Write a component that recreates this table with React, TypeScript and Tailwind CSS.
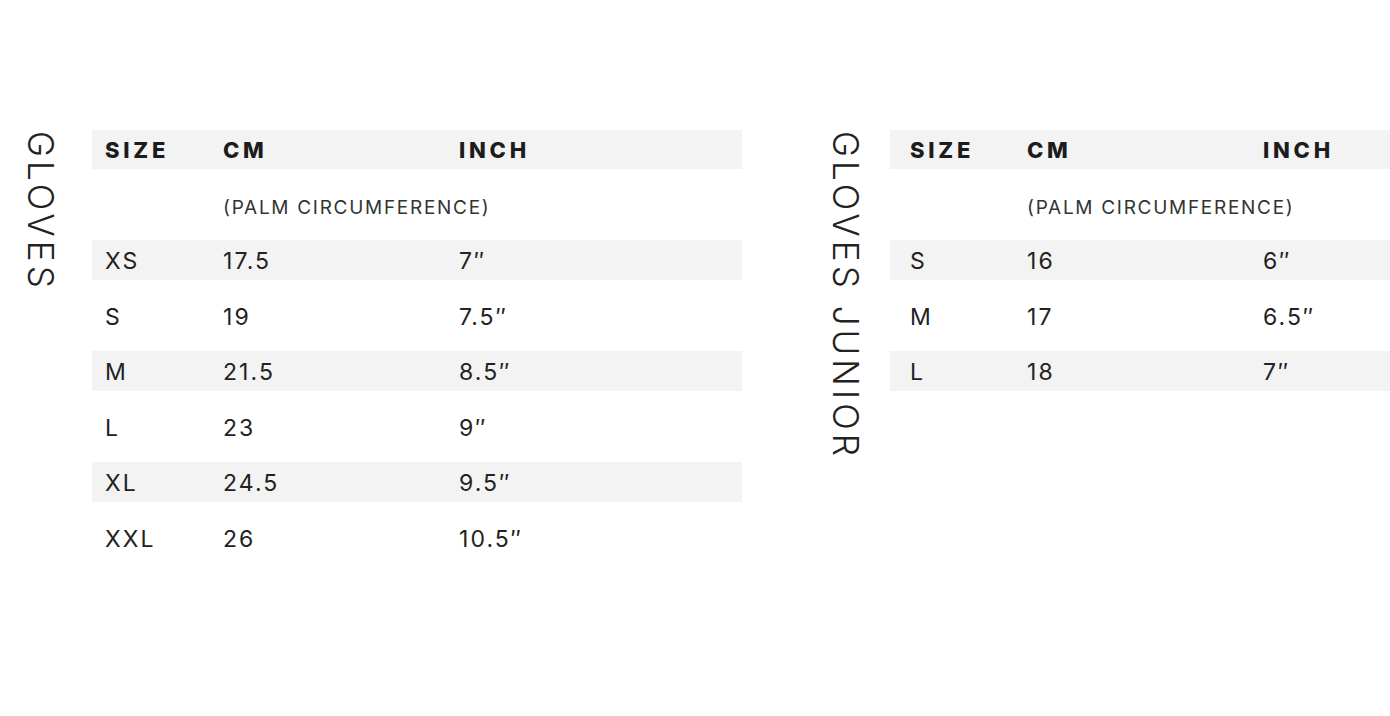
import React from 'react';

type Row = { size: string; cm: string; inch: string };

const adult: Row[] = [
    { size: 'XS', cm: '17.5', inch: '7″' },
    { size: 'S', cm: '19', inch: '7.5″' },
    { size: 'M', cm: '21.5', inch: '8.5″' },
    { size: 'L', cm: '23', inch: '9″' },
    { size: 'XL', cm: '24.5', inch: '9.5″' },
    { size: 'XXL', cm: '26', inch: '10.5″' },
];

const junior: Row[] = [
    { size: 'S', cm: '16', inch: '6″' },
    { size: 'M', cm: '17', inch: '6.5″' },
    { size: 'L', cm: '18', inch: '7″' },
];

function SideLabel({ text }: { text: string }) {
    return (
        <div className="[writing-mode:vertical-rl] text-[35px] leading-[25px] font-light tracking-[0.115em] text-[#222] whitespace-nowrap">
            {text}
        </div>
    );
}

function SizeTable({ rows, cols }: { rows: Row[]; cols: [string, string, string] }) {
    return (
        <div className="w-[650px] shrink-0 flex flex-col gap-[15.5px] text-[#222]">
            {/* Header */}
            <div className="h-[39px] pt-[2px] bg-[#f3f3f3] flex items-center text-[22px] font-extrabold tracking-[0.17em] text-[#1c1c1c]">
                <div className={cols[0]}>SIZE</div>
                <div className={cols[1]}>CM</div>
                <div className={cols[2]}>INCH</div>
            </div>

            <div className="h-[40px] pt-[8px] flex items-center text-[19px] tracking-[0.09em] text-[#333]">
                <div className={cols[0]} />
                <div className={cols[1]}>(PALM CIRCUMFERENCE)</div>
            </div>

            {rows.map((r, i) => (
                <div
                    key={r.size}
                    className={`h-[40px] pt-[3px] flex items-center text-[23px] tracking-[0.09em] ${i % 2 === 0 ? 'bg-[#f3f3f3]' : ''}`}
                >
                    <div className={cols[0]}>{r.size}</div>
                    <div className={cols[1]}>{r.cm}</div>
                    <div className={cols[2]}>{r.inch}</div>
                </div>
            ))}
        </div>
    );
}

export default function App() {
    return (
        <div
            className="w-[1390px] h-[716px] overflow-hidden bg-white"
            style={{ fontFamily: 'Inter, "Noto Sans", sans-serif' }}
        >
            <div className="flex items-start pt-[130px] pl-[28px] w-[2000px]">
                <div className="pt-[1px]">
                    <SideLabel text="GLOVES" />
                </div>
                <div className="ml-[39px]">
                    <SizeTable rows={adult} cols={['pl-[13px] w-[131px] shrink-0', 'w-[236px] shrink-0 whitespace-nowrap', 'shrink-0']} />
                </div>
                <div className="ml-[91px] pt-[1px]">
                    <SideLabel text="GLOVES JUNIOR" />
                </div>
                <div className="ml-[32px]">
                    <SizeTable rows={junior} cols={['pl-[20px] w-[137px] shrink-0', 'w-[236px] shrink-0 whitespace-nowrap', 'shrink-0']} />
                </div>
            </div>
        </div>
    );
}
